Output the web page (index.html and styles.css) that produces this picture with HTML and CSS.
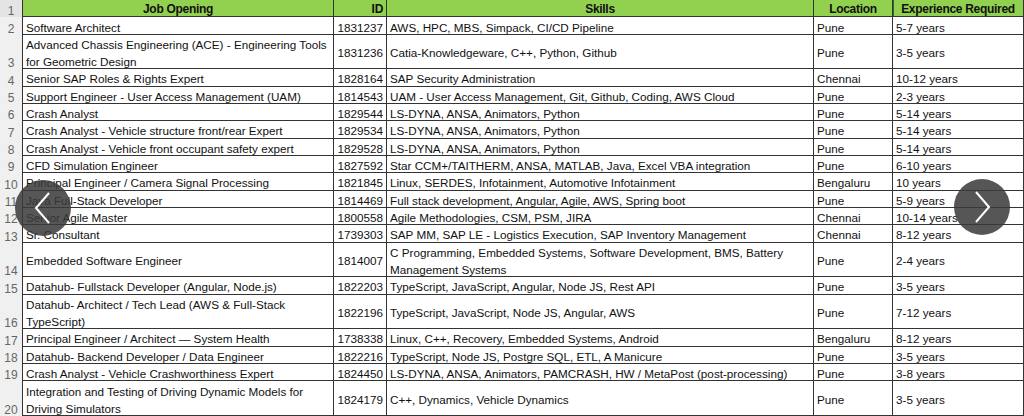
FILE: index.html
```html
<!DOCTYPE html>
<html>
<head>
<meta charset="utf-8">
<link rel="stylesheet" href="styles.css">
</head>
<body>
<div class="sheet">
  <div class="row head">
    <div class="rn rn-head">1</div>
    <div class="c c-job">Job Opening</div>
    <div class="c c-id">ID</div>
    <div class="c c-center">Skills</div>
    <div class="c c-center">Location</div>
    <div class="c c-center c-sel">Experience Required</div>
  </div>
  <div class="row"><div class="rn">2</div><div class="c">Software Architect</div><div class="c c-id">1831237</div><div class="c">AWS, HPC, MBS, Simpack, CI/CD Pipeline</div><div class="c">Pune</div><div class="c">5-7 years</div></div>
  <div class="row tall"><div class="rn">3</div><div class="c">Advanced Chassis Engineering (ACE) - Engineering Tools<br>for Geometric Design</div><div class="c c-id">1831236</div><div class="c">Catia-Knowledgeware, C++, Python, Github</div><div class="c">Pune</div><div class="c">3-5 years</div></div>
  <div class="row"><div class="rn">4</div><div class="c">Senior SAP Roles &amp; Rights Expert</div><div class="c c-id">1828164</div><div class="c">SAP Security Administration</div><div class="c">Chennai</div><div class="c">10-12 years</div></div>
  <div class="row"><div class="rn">5</div><div class="c">Support Engineer - User Access Management (UAM)</div><div class="c c-id">1814543</div><div class="c">UAM - User Access Management, Git, Github, Coding, AWS Cloud</div><div class="c">Pune</div><div class="c">2-3 years</div></div>
  <div class="row"><div class="rn">6</div><div class="c">Crash Analyst</div><div class="c c-id">1829544</div><div class="c">LS-DYNA, ANSA, Animators, Python</div><div class="c">Pune</div><div class="c">5-14 years</div></div>
  <div class="row"><div class="rn">7</div><div class="c">Crash Analyst - Vehicle structure front/rear Expert</div><div class="c c-id">1829534</div><div class="c">LS-DYNA, ANSA, Animators, Python</div><div class="c">Pune</div><div class="c">5-14 years</div></div>
  <div class="row"><div class="rn">8</div><div class="c">Crash Analyst - Vehicle front occupant safety expert</div><div class="c c-id">1829528</div><div class="c">LS-DYNA, ANSA, Animators, Python</div><div class="c">Pune</div><div class="c">5-14 years</div></div>
  <div class="row"><div class="rn">9</div><div class="c">CFD Simulation Engineer</div><div class="c c-id">1827592</div><div class="c">Star CCM+/TAITHERM, ANSA, MATLAB, Java, Excel VBA integration</div><div class="c">Pune</div><div class="c">6-10 years</div></div>
  <div class="row"><div class="rn">10</div><div class="c">Principal Engineer / Camera Signal Processing</div><div class="c c-id">1821845</div><div class="c">Linux, SERDES, Infotainment, Automotive Infotainment</div><div class="c">Bengaluru</div><div class="c">10 years</div></div>
  <div class="row"><div class="rn">11</div><div class="c">Java Full-Stack Developer</div><div class="c c-id">1814469</div><div class="c">Full stack development, Angular, Agile, AWS, Spring boot</div><div class="c">Pune</div><div class="c">5-9 years</div></div>
  <div class="row"><div class="rn">12</div><div class="c">Senior Agile Master</div><div class="c c-id">1800558</div><div class="c">Agile Methodologies, CSM, PSM, JIRA</div><div class="c">Chennai</div><div class="c">10-14 years</div></div>
  <div class="row"><div class="rn">13</div><div class="c">Sr. Consultant</div><div class="c c-id">1739303</div><div class="c">SAP MM, SAP LE - Logistics Execution, SAP Inventory Management</div><div class="c">Chennai</div><div class="c">8-12 years</div></div>
  <div class="row tall"><div class="rn">14</div><div class="c">Embedded Software Engineer</div><div class="c c-id">1814007</div><div class="c">C Programming, Embedded Systems, Software Development, BMS, Battery<br>Management Systems</div><div class="c">Pune</div><div class="c">2-4 years</div></div>
  <div class="row"><div class="rn">15</div><div class="c">Datahub- Fullstack Developer (Angular, Node.js)</div><div class="c c-id">1822203</div><div class="c">TypeScript, JavaScript, Angular, Node JS, Rest API</div><div class="c">Pune</div><div class="c">3-5 years</div></div>
  <div class="row tall"><div class="rn">16</div><div class="c">Datahub- Architect / Tech Lead (AWS &amp; Full-Stack<br>TypeScript)</div><div class="c c-id">1822196</div><div class="c">TypeScript, JavaScript, Node JS, Angular, AWS</div><div class="c">Pune</div><div class="c">7-12 years</div></div>
  <div class="row"><div class="rn">17</div><div class="c">Principal Engineer / Architect — System Health</div><div class="c c-id">1738338</div><div class="c">Linux, C++, Recovery, Embedded Systems, Android</div><div class="c">Bengaluru</div><div class="c">8-12 years</div></div>
  <div class="row"><div class="rn">18</div><div class="c">Datahub- Backend Developer / Data Engineer</div><div class="c c-id">1822216</div><div class="c">TypeScript, Node JS, Postgre SQL, ETL, A Manicure</div><div class="c">Pune</div><div class="c">3-5 years</div></div>
  <div class="row"><div class="rn">19</div><div class="c">Crash Analyst - Vehicle Crashworthiness Expert</div><div class="c c-id">1824450</div><div class="c">LS-DYNA, ANSA, Animators, PAMCRASH, HW / MetaPost (post-processing)</div><div class="c">Pune</div><div class="c">3-8 years</div></div>
  <div class="row tall"><div class="rn">20</div><div class="c">Integration and Testing of Driving Dynamic Models for<br>Driving Simulators</div><div class="c c-id">1824179</div><div class="c">C++, Dynamics, Vehicle Dynamics</div><div class="c">Pune</div><div class="c">3-5 years</div></div>

  <button class="nav nav-prev" aria-label="Previous">
    <svg width="56" height="56" viewBox="0 0 56 56"><polyline points="34,13 21,28 34,43" fill="none" stroke="#fff" stroke-width="2"/></svg>
  </button>
  <button class="nav nav-next" aria-label="Next">
    <svg width="56" height="56" viewBox="0 0 56 56"><polyline points="22,13 35,28 22,43" fill="none" stroke="#fff" stroke-width="2"/></svg>
  </button>
</div>
</body>
</html>
```
FILE: styles.css
```css
* { box-sizing: border-box; }
html, body { margin: 0; padding: 0; background: #fff; }
body {
  width: 1024px;
  height: 416px;
  overflow: hidden;
  font-family: "Liberation Sans", Arial, sans-serif;
  font-size: 11.7px;
  color: #111;
}
.sheet { position: relative; width: 1024px; height: 416px; }
.row {
  display: grid;
  grid-template-columns: 22px 312px 53px 427px 79px 131px;
  height: 17.333px;
}
.row.tall { height: 34.667px; }
.rn {
  background: #f0f0f0;
  color: #666;
  display: flex;
  align-items: flex-end;
  justify-content: center;
  padding-bottom: 0;
  line-height: 12px;
  font-size: 12px;
}
.rn-head { background: #e4e4e4; }
.c {
  display: flex;
  align-items: center;
  padding: 3px 3px 0;
  white-space: nowrap;
  overflow: hidden;
  line-height: 17px;
  border-right: 1px solid #333;
  border-bottom: 1px solid #333;
}
.row .c:nth-child(2) { border-left: 1px solid #333; }
.c-id { justify-content: flex-end; }
.head .c {
  background: #92d050;
  font-weight: bold;
  font-size: 12px;
  letter-spacing: -0.3px;
  justify-content: center;
  color: #101010;
}
.head .c-id { justify-content: flex-end; }
.head .c-sel { box-shadow: inset 1px 0 0 #2f6b35; }
.nav {
  position: absolute;
  width: 56px;
  height: 56px;
  border: 0;
  padding: 0;
  border-radius: 50%;
  background: rgba(58, 58, 58, 0.86);
  display: flex;
  align-items: center;
  justify-content: center;
}
.nav svg { display: block; }
.nav-prev { left: 15px; top: 180px; }
.nav-next { left: 954px; top: 179px; }
```
